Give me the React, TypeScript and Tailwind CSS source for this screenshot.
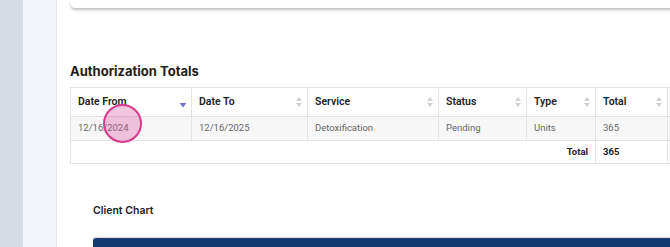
import React from "react";

const cols = [
    { label: "Date From", w: "w-[121px]", value: "12/16/2024", sort: "desc" },
    { label: "Date To", w: "w-[116px]", value: "12/16/2025", sort: "none" },
    { label: "Service", w: "w-[131px]", value: "Detoxification", sort: "none" },
    { label: "Status", w: "w-[88px]", value: "Pending", sort: "none" },
    { label: "Type", w: "w-[69px]", value: "Units", sort: "none" },
    { label: "Total", w: "w-[72px]", value: "365", sort: "none" },
];

function SortIcon({ sort }: { sort: string }) {
    if (sort === "desc") {
        return (
            <svg width="8" height="12" viewBox="0 0 8 12" className="shrink-0 mt-[6px]">
                <path d="M0.5 4 L7.5 4 L4 8.5 Z" fill="#6f78d8" />
            </svg>
        );
    }
    return (
        <svg width="8" height="12" viewBox="0 0 8 12" className="shrink-0">
            <path d="M1 5 L7 5 L4 1 Z" fill="#d2d2d2" />
            <path d="M1 7 L7 7 L4 11 Z" fill="#d2d2d2" />
        </svg>
    );
}

export default function App() {
    return (
        <div className="flex w-[670px] h-[247px] overflow-hidden bg-white font-['Roboto',sans-serif]">
            <div className="w-[23px] shrink-0 bg-[#d6dbe6]" />
            <div className="w-[34px] shrink-0 bg-[#f2f5fb] border-r border-[#e6e9ef]" />
            <div className="relative flex-1 flex flex-col pl-[13px] overflow-hidden">
                <div className="h-[8px] shrink-0 ml-px -mr-4 bg-white rounded-bl shadow-[0_2px_3px_rgba(0,0,0,0.25)]" />
                <h2 className="mt-[55px] text-[13px] leading-[17px] font-bold text-[#1e1e1e] font-['Inter',sans-serif]">
                    Authorization Totals
                </h2>
                <div className="mt-[7px] w-[620px] border-l border-t border-[#e3e3e3] text-[9.5px]">
                    <div className="flex h-[29px] border-b border-[#e3e3e3]">
                        {cols.map((c) => (
                            <div
                                key={c.label}
                                className={`${c.w} shrink-0 flex items-center justify-between pl-[7px] pr-[4px] border-r border-[#e3e3e3] font-semibold text-[10.5px] text-[#222]`}
                            >
                                <span>{c.label}</span>
                                <SortIcon sort={c.sort} />
                            </div>
                        ))}
                        <div className="flex-1" />
                    </div>
                    <div className="flex h-[24px] bg-[#f7f7f7] border-b border-[#e3e3e3]">
                        {cols.map((c) => (
                            <div
                                key={c.label}
                                className={`${c.w} shrink-0 flex items-center pl-[7px] border-r border-[#e3e3e3] text-[#666]`}
                            >
                                {c.value}
                            </div>
                        ))}
                        <div className="flex-1" />
                    </div>
                    <div className="flex h-[23px] border-b border-[#e3e3e3]">
                        <div className="w-[525px] shrink-0 flex items-center justify-end pr-[7px] border-r border-[#e3e3e3] font-bold text-[#222]">
                            Total
                        </div>
                        <div className="w-[72px] shrink-0 flex items-center pl-[7px] border-r border-[#e3e3e3] font-bold text-[#222]">
                            365
                        </div>
                        <div className="flex-1" />
                    </div>
                </div>
                <div className="mt-[40px] pl-[23px] text-[10.5px] leading-[14px] font-semibold text-[#222] font-['Inter',sans-serif]">
                    Client Chart
                </div>
                <div className="mt-[20px] ml-[23px] -mr-4 h-[20px] bg-[#143a72] rounded-tl-[3px] shadow-[0_-1px_2px_rgba(0,0,0,0.15)]" />
                <div className="absolute left-[46px] top-[104px] w-[39px] h-[39px] rounded-full border-2 border-[#d83a8c] bg-[rgba(222,90,160,0.35)]" />
            </div>
        </div>
    );
}
